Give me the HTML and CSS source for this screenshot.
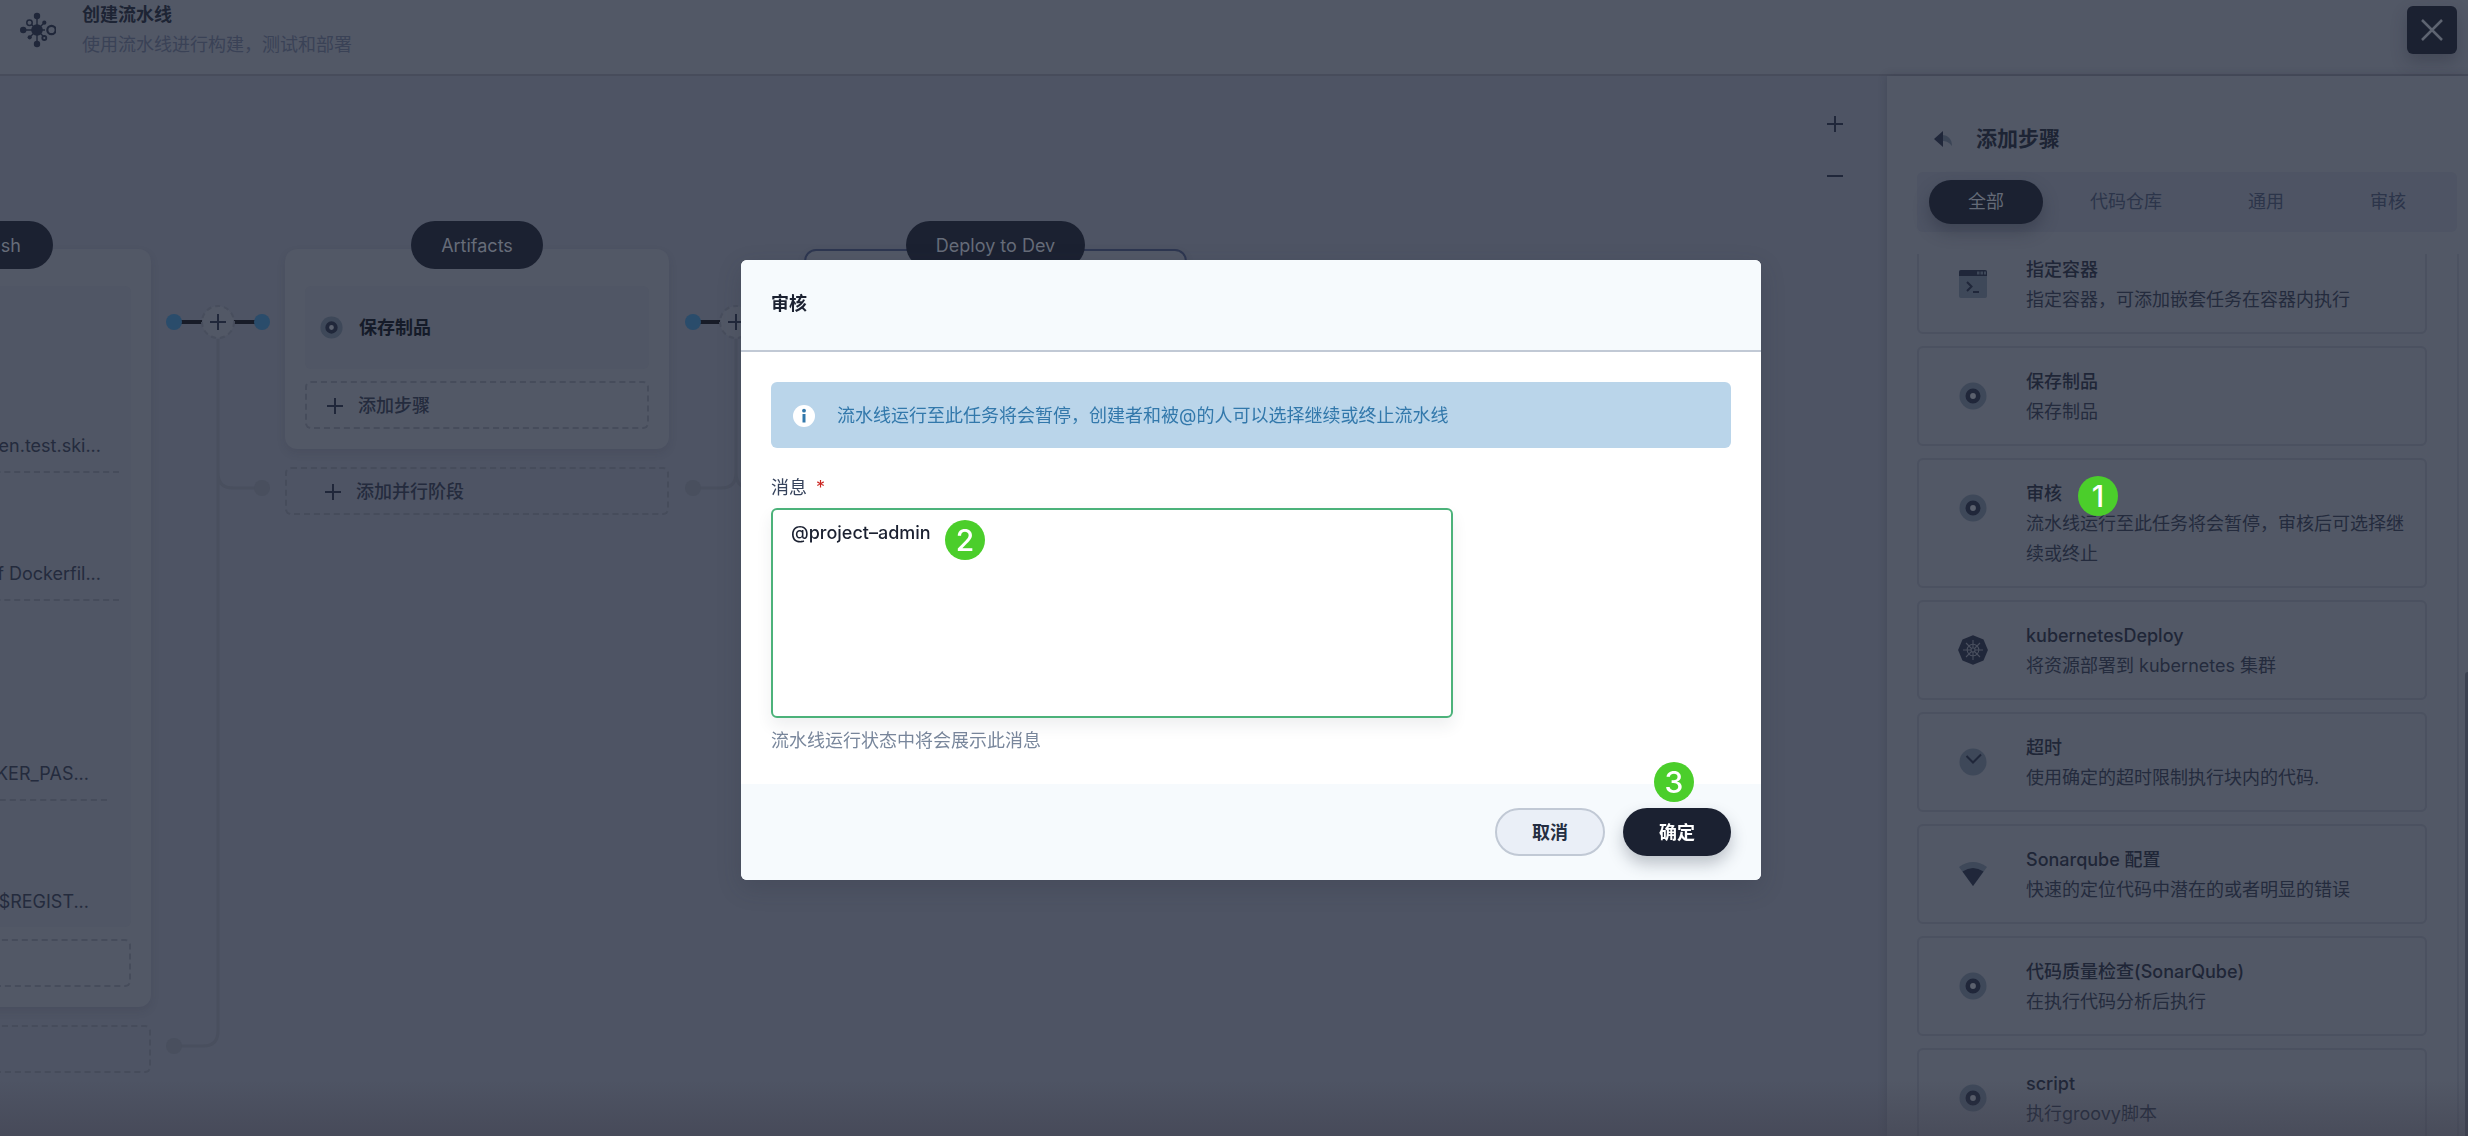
FILE: index.html
```html
<!DOCTYPE html>
<html lang="zh-CN">
<head>
<meta charset="utf-8">
<title>创建流水线</title>
<link rel="stylesheet" href="styles.css">
</head>
<body>
<svg class="sprite" aria-hidden="true">
  <symbol id="i-step" viewBox="0 0 28 28"><circle cx="14" cy="14" r="13.5" fill="#3e4859"/><circle cx="14" cy="14" r="5.2" fill="#5b616e" stroke="#20273a" stroke-width="4.6"/></symbol>
  <symbol id="i-plus" viewBox="0 0 16 16"><path d="M8 0v16M0 8h16" stroke="currentColor" stroke-width="2"/></symbol>
  <symbol id="i-minus" viewBox="0 0 16 16"><path d="M0 8h16" stroke="currentColor" stroke-width="2"/></symbol>
</svg>

<div class="page">
  <header class="topbar">
    <svg class="logo" viewBox="0 0 38 38" fill="#20273a" stroke="#20273a">
      <path d="M19 5v28M5 19h22M12 12l14 14M26 12L12 26" stroke-width="1.4" fill="none"/>
      <g stroke="none"><circle cx="19" cy="19" r="5.8"/><circle cx="19" cy="5" r="3.2"/><circle cx="19" cy="33" r="3.2"/><circle cx="5.200" cy="19" r="3.2"/><circle cx="26.300" cy="11.700" r="2.100"/><circle cx="11.700" cy="26.300" r="2.100"/></g>
      <circle cx="11.500" cy="11.700" r="2.700" fill="#525866" stroke-width="1.500"/>
      <circle cx="33.500" cy="19" r="4.200" fill="#525866" stroke-width="2.200"/>
      <circle cx="26.300" cy="27" r="2" fill="#525866" stroke-width="1.800"/>
    </svg>
    <div class="heading">
      <h1>创建流水线</h1>
      <p>使用流水线进行构建，测试和部署</p>
    </div>
    <button class="close" aria-label="关闭"><svg viewBox="0 0 22 22"><path d="M1 1l20 20M21 1L1 21" stroke="#5e6471" stroke-width="2.500"/></svg></button>
  </header>

  <div class="main">
    <section class="canvas">
      <div class="zoomer">
        <button aria-label="放大"><svg><use href="#i-plus"/></svg></button>
        <button aria-label="缩小"><svg><use href="#i-minus"/></svg></button>
      </div>
      <div class="pipeline">
        <div class="stage">
          <div class="card">
            <span class="pill pill-long">build &amp; push</span>
            <div class="step logs">
              <p class="log">en.test.ski...</p>
              <p class="log">f Dockerfil...</p>
              <p class="log nested">KER_PAS...</p>
              <p class="log nested last">$REGIST...</p>
            </div>
            <button class="add" aria-label="添加步骤"></button>
          </div>
          <button class="add parallel" aria-label="添加并行阶段"></button>
        </div>
        <svg class="link" viewBox="0 0 134 824" fill="none">
          <path d="M67 102V236q0 15 15 15h29M67 102V794q0 15-15 15h-29" stroke="#494f5e" stroke-width="3"/>
          <g fill="#494f5e"><circle cx="111" cy="251" r="8"/><circle cx="23" cy="809" r="8"/></g>
          <path d="M23 85h29M82 85h29" stroke="#181c28" stroke-width="4"/>
          <g fill="#2a4c6b"><circle cx="23" cy="85" r="8"/><circle cx="111" cy="85" r="8"/></g>
          <circle cx="67" cy="85" r="16" fill="#525866" stroke="#484e5d" stroke-width="2" stroke-dasharray="5 4"/>
          <path d="M67 77v16M59 85h16" stroke="#20273a" stroke-width="2"/>
        </svg>
        <div class="stage">
          <div class="card">
            <span class="pill">Artifacts</span>
            <div class="step single"><svg><use href="#i-step"/></svg><strong>保存制品</strong></div>
            <button class="add"><svg><use href="#i-plus"/></svg>添加步骤</button>
          </div>
          <button class="add parallel"><svg><use href="#i-plus"/></svg>添加并行阶段</button>
        </div>
        <svg class="link" viewBox="0 0 134 824" fill="none">
          <path d="M67 102V236q0 15 15 15h29M67 102V236q0 15-15 15h-29" stroke="#494f5e" stroke-width="3"/>
          <g fill="#494f5e"><circle cx="111" cy="251" r="8"/><circle cx="24" cy="251" r="8"/></g>
          <path d="M24 85h28M82 85h29" stroke="#181c28" stroke-width="4"/>
          <g fill="#2a4c6b"><circle cx="24" cy="85" r="8"/><circle cx="111" cy="85" r="8"/></g>
          <circle cx="67" cy="85" r="16" fill="#525866" stroke="#484e5d" stroke-width="2" stroke-dasharray="5 4"/>
          <path d="M67 77v16M59 85h16" stroke="#20273a" stroke-width="2"/>
        </svg>
        <div class="stage">
          <div class="card active"><span class="pill">Deploy to Dev</span></div>
        </div>
      </div>
    </section>

    <aside class="sidebar">
      <div class="side-head">
        <button aria-label="返回"><svg viewBox="0 0 18 16"><path d="M8 4c6 0 10 4 10 11-3-4-6-5-10-5z" fill="#3b4556"/><path d="M0 8l9-8v16z" fill="#20273a"/></svg></button>
        <h2>添加步骤</h2>
      </div>
      <nav class="tabs">
        <button class="on">全部</button><button>代码仓库</button><button>通用</button><button>审核</button>
      </nav>
      <div class="list">
        <button class="item">
          <svg viewBox="0 0 28 28"><rect y="0" width="28" height="28" rx="2" fill="#3e4859"/><path d="M0 6V2q0-2 2-2h24q2 0 2 2v4z" fill="#20273a"/><path d="M18 1.500h2.500v3H18zM21.500 1.500H24v3h-2.500zM25 1.500h2v3h-2z" fill="#3e4859"/><path d="M8 12l4.500 4.500L8 21M14 22h6" fill="none" stroke="#20273a" stroke-width="2"/></svg>
          <span class="txt"><b>指定容器</b><span>指定容器，可添加嵌套任务在容器内执行</span></span>
        </button>
        <button class="item">
          <svg><use href="#i-step"/></svg>
          <span class="txt"><b>保存制品</b><span>保存制品</span></span>
        </button>
        <button class="item">
          <svg><use href="#i-step"/></svg>
          <span class="txt"><b>审核</b><span>流水线运行至此任务将会暂停，审核后可选择继续或终止</span></span>
          <i class="badge b1">1</i>
        </button>
        <button class="item">
          <svg viewBox="0 0 28 28"><path d="M14-.8L24.500 3.500 28.900 14 24.500 24.500 14 28.800 3.500 24.500-.9 14 3.500 3.500z" fill="#20273a"/><g fill="none" stroke="#4a505f" stroke-width="1.100"><circle cx="14" cy="14" r="5.800"/><circle cx="14" cy="14" r="2"/><path d="M14 4v8M14 16v8M4 14h8M16 14h8M7 7l5.500 5.500M15.500 15.500L21 21M21 7l-5.500 5.500M12.500 15.500L7 21"/></g></svg>
          <span class="txt"><b>kubernetesDeploy</b><span>将资源部署到 kubernetes 集群</span></span>
        </button>
        <button class="item">
          <svg viewBox="0 0 28 28"><circle cx="14" cy="14" r="13.500" fill="#3e4859"/><path d="M7.500 8l6.500 6.500L22 6.500" fill="none" stroke="#20273a" stroke-width="2"/></svg>
          <span class="txt"><b>超时</b><span>使用确定的超时限制执行块内的代码.</span></span>
        </button>
        <button class="item">
          <svg viewBox="0 0 28 28"><path d="M0 7q14-10 28 0L14 26z" fill="#3e4859"/><path d="M3.500 11.500q10.500-7 21 0L14 26z" fill="#20273a"/></svg>
          <span class="txt"><b>Sonarqube 配置</b><span>快速的定位代码中潜在的或者明显的错误</span></span>
        </button>
        <button class="item">
          <svg><use href="#i-step"/></svg>
          <span class="txt"><b>代码质量检查(SonarQube)</b><span>在执行代码分析后执行</span></span>
        </button>
        <button class="item">
          <svg><use href="#i-step"/></svg>
          <span class="txt"><b>script</b><span>执行groovy脚本</span></span>
        </button>
        <span class="thumb"></span>
      </div>
    </aside>
  </div>
</div>

<div class="overlay">
  <form class="modal" role="dialog" aria-labelledby="modal-title">
    <div class="modal-head"><h2 id="modal-title">审核</h2></div>
    <div class="modal-body">
      <div class="alert">
        <svg viewBox="0 0 22 22"><circle cx="11" cy="11" r="11" fill="#fff"/><circle cx="11" cy="5.700" r="1.900" fill="#3278ab"/><path d="M11 9v8.500" stroke="#3278ab" stroke-width="3"/></svg>
        流水线运行至此任务将会暂停，创建者和被@的人可以选择继续或终止流水线
      </div>
      <label for="msg">消息 <em>*</em></label>
      <div class="field">
        <textarea id="msg" spellcheck="false">@project–admin</textarea>
        <i class="badge b2">2</i>
      </div>
      <p class="hint">流水线运行状态中将会展示此消息</p>
    </div>
    <div class="modal-foot">
      <button type="button" class="btn cancel">取消</button>
      <button type="button" class="btn ok">确定<i class="badge b3">3</i></button>
    </div>
  </form>
</div>
</body>
</html>
```
FILE: styles.css
```css
* { box-sizing: border-box; }
body {
  margin: 0;
  font: 400 18px/30px Inter, "Noto Sans CJK SC", sans-serif;
  color: #242b3d;
  background: #4e5464;
}
h1, h2, p { margin: 0; font-size: 18px; }
button { font: inherit; color: inherit; background: none; border: 0; padding: 0; }
.sprite { position: absolute; width: 0; height: 0; }

.page { height: 100vh; display: flex; flex-direction: column; overflow: hidden; position: relative; }
.page::after {
  content: ""; position: absolute; inset: auto 0 0 0; height: 56px;
  background: linear-gradient(rgba(62, 62, 76, 0), rgba(62, 62, 76, .45));
}

/* top bar */
.topbar {
  flex: none; height: 76px; display: flex; align-items: flex-start;
  background: #525866; border-bottom: 2px solid #474c5b; padding: 0 11px 0 18px;
}
.logo { width: 38px; height: 38px; margin: 11px 26px 0 0; }
.heading { flex: 1; }
.heading h1 { font-weight: 600; color: #1d2434; }
.heading p { color: #3a4256; }
.close {
  width: 50px; height: 48px; margin-top: 6px; border-radius: 6px; background: #1b2131;
  display: grid; place-items: center; box-shadow: 0 8px 16px rgba(35, 40, 55, .3);
}
.close svg { width: 22px; height: 22px; }

.main { flex: 1; min-height: 0; display: grid; grid-template-columns: minmax(0, 1fr) 581px; }

/* pipeline canvas */
.canvas { overflow: hidden; }
.zoomer { display: flex; flex-direction: column; align-items: flex-end; gap: 36px; padding: 40px 44px 0 0; }
.zoomer button { width: 16px; height: 16px; display: block; }
.zoomer svg, .add svg { width: 16px; height: 16px; display: block; color: #20273a; }
.pipeline { display: flex; align-items: flex-start; margin: 65px 0 0 -233px; width: max-content; }
.stage { width: 384px; }
.card {
  display: flex; flex-direction: column; align-items: stretch; min-height: 200px;
  background: #525866; border-radius: 12px; padding: 0 20px 20px;
  box-shadow: 0 4px 8px rgba(40, 45, 60, .12);
}
.card.active { border: 2px solid #2d3650; margin-left: 1px; }
.pill {
  align-self: center; height: 48px; margin: -28px 0 17px; padding: 0 30px;
  border-radius: 24px; background: #1b2131; color: #666c79; line-height: 50px;
}
.card.active .pill { margin-top: -30px; }
.pill-long { width: 188px; margin-right: 78px; padding: 0 32px; text-align: right; align-self: flex-end; }
.step { background: #505665; border-radius: 6px; }
.single { height: 83px; display: flex; align-items: center; gap: 16px; padding-left: 15px; color: #151b29; }
.single strong { font-weight: 600; }
.single svg { width: 23px; height: 23px; }
.logs { padding: 145px 12px 0 0; }
.log {
  text-align: right; white-space: nowrap; padding: 0 18px 10px 0;
  border-bottom: 2px dashed #464c5b; margin-bottom: 86px;
}
.log:nth-child(2) { margin-bottom: 0; }
.log.nested { margin: 158px 12px 86px 0; }
.logs .last { margin: 0 12px 0 0; border: 0; }
.add {
  display: flex; align-items: center; gap: 15px; width: 100%; height: 48px;
  margin-top: 12px; padding: 2px 0 0 20px; border: 2px dashed #464c5b; border-radius: 6px; font-weight: 500;
}
.parallel { margin-top: 18px; padding-left: 38px; }
.link { width: 134px; height: 824px; flex: none; margin-top: -12px; }

/* sidebar */
.sidebar {
  background: #525866; padding: 0 0 0 30px; display: flex; flex-direction: column;
  min-height: 0; box-shadow: 0 0 8px rgba(40, 45, 60, .3);
}
.side-head { display: flex; align-items: center; gap: 24px; margin: 48px 0 18px 17px; }
.side-head h2 { font-size: 21px; font-weight: 600; color: #1d2434; }
.side-head button { height: 22px; width: 18px; }
.side-head svg { width: 18px; height: 16px; display: block; }
.tabs {
  display: flex; gap: 8px; margin-right: 11px; height: 60px; padding: 8px 12px;
  background: #4e5464; border-radius: 6px; color: #2c354a;
}
.tabs button { flex: none; padding: 0 39px; border-radius: 22px; white-space: nowrap; }
.tabs .on { background: #1b2131; color: #646a77; box-shadow: 0 8px 16px rgba(35, 40, 55, .35); }
.list {
  position: relative; flex: 1; min-height: 0; overflow: hidden; margin: 22px 0 0; padding-right: 41px;
  display: flex; flex-direction: column; gap: 12px;
  background: linear-gradient(#4c5261, #4c5261) right 9px top / 2px 100% no-repeat;
}
.item {
  position: relative; flex: none; display: flex; align-items: flex-start; gap: 39px;
  border: 2px solid #4b5160; border-radius: 6px; padding: 19px 20px 17px 40px; text-align: left;
}
.item:first-child { margin-top: -20px; }
.item svg { width: 28px; height: 28px; flex: none; margin-top: 15px; overflow: visible; }
.txt > * { display: block; }
.txt b { font-weight: 500; color: #1f2637; }
.thumb { position: absolute; right: 0; top: 418px; bottom: 0; width: 3px; background: #3c4251; border-radius: 3px 0 0 0; }

/* numbered markers */
.badge {
  position: absolute; width: 40px; height: 40px; border-radius: 50%; background: #4bce2b; color: #fff;
  font: 500 30px/40px Inter, sans-serif; text-align: center;
}
.b1 { left: 159px; top: 16px; }
.b2 { left: 174px; top: 12px; }
.b3 { left: 31px; top: -46px; }

/* dialog */
.overlay { position: fixed; inset: 0; display: flex; justify-content: center; align-items: flex-start; padding: 260px 0 0 34px; }
.modal { width: 1020px; border-radius: 6px; background: #fff; overflow: hidden; box-shadow: 0 8px 24px rgba(40, 45, 60, .2); }
.modal-head { padding: 29px 30px 31px; background: #f6fafd; border-bottom: 2px solid #c1c9d5; }
.modal-head h2 { font-weight: 600; color: #1b2131; }
.modal-body { padding: 30px 30px 28px; }
.alert {
  display: flex; align-items: center; gap: 22px; padding: 19px 22px 17px; margin-bottom: 25px;
  background: #bad5ea; color: #3278ab; border-radius: 6px;
}
.alert svg { width: 22px; height: 22px; }
label { display: block; margin-bottom: 5px; color: #36435c; }
label em { color: #ca2621; font-style: normal; margin-left: 4px; }
.field { position: relative; width: 682px; }
textarea {
  display: block; width: 100%; height: 210px; padding: 8px 18px; resize: none; outline: 0;
  font: inherit; font-weight: 500; color: #1b2131; background: #fff;
  border: 2px solid #4cb27a; border-radius: 6px; box-shadow: 0 8px 16px rgba(36, 46, 66, .08);
}
.hint { margin-top: 8px; color: #79879c; }
.modal-foot { display: flex; justify-content: flex-end; gap: 18px; padding: 24px 30px; background: #f6fafd; }
.btn { position: relative; width: 108px; height: 48px; padding-top: 2px; border-radius: 24px; font-weight: 600; }
.cancel { width: 110px; background: #eaeff7; border: 2px solid #c1c9d5; color: #242e42; }
.ok { background: #1b2131; color: #fff; box-shadow: 0 8px 16px rgba(36, 46, 66, .28); }
```
